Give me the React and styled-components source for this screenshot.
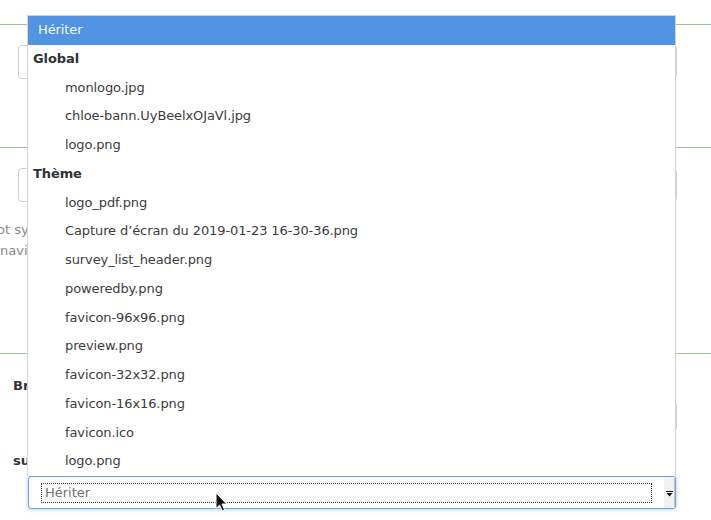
import React from 'react'
import styled, { createGlobalStyle } from 'styled-components'

const GlobalStyle = createGlobalStyle`
  html, body {
    margin: 0;
    padding: 0;
    background: #ffffff;
    overflow: hidden;
  }
  body {
    font-family: "DejaVu Sans", "Noto Sans", sans-serif;
    font-size: 13px;
    color: #333333;
  }
`

const options = [
  { label: 'Global', group: true },
  { label: 'monlogo.jpg' },
  { label: 'chloe-bann.UyBeelxOJaVl.jpg' },
  { label: 'logo.png' },
  { label: 'Thème', group: true },
  { label: 'logo_pdf.png' },
  { label: 'Capture d’écran du 2019-01-23 16-30-36.png' },
  { label: 'survey_list_header.png' },
  { label: 'poweredby.png' },
  { label: 'favicon-96x96.png' },
  { label: 'preview.png' },
  { label: 'favicon-32x32.png' },
  { label: 'favicon-16x16.png' },
  { label: 'favicon.ico' },
  { label: 'logo.png' },
]

export default function App() {
  return (
    <>
      <GlobalStyle />
      <Page>
        <Section $height={123}>
          <TextBox $left={18} $height={34} />
        </Section>
        <Section $height={206}>
          <TextBox $left={18} $height={34} />
          <HelpText>
            <span className="cut">ot system logo used for the survey page header</span>
            <span>navigation and the public list of surveys</span>
          </HelpText>
        </Section>
        <Section $height={180}>
          <FieldLabel $top={2}>Brand logo</FieldLabel>
          <TextBox $left={40} $height={31} $top={5} />
          <FieldLabel $top={19}>survey logo</FieldLabel>
          <SelectWrap>
            <DropList>
              <Option $active>Hériter</Option>
              {options.map((o, i) => (
                <Option key={i} $group={o.group}>{o.label}</Option>
              ))}
            </DropList>
            <Select>
              <FocusRing>Hériter</FocusRing>
              <ArrowBox>
                <svg width="7" height="6" viewBox="0 0 7 6">
                  <path d="M0 0h7v1H0z" fill="#111" />
                  <path d="M0.5 2h6L3.5 5.5z" fill="#111" />
                </svg>
              </ArrowBox>
            </Select>
          </SelectWrap>
        </Section>
        <Cursor width="13" height="20" viewBox="0 0 13 20">
          <path
            d="M1 1 L1 16.5 L4.6 13 L7.2 18.8 L9.6 17.7 L7 12 L11.8 12 Z"
            fill="#111"
            stroke="#fff"
            strokeWidth="1"
            strokeLinejoin="round"
          />
        </Cursor>
      </Page>
    </>
  )
}

const Page = styled.div`
  position: relative;
  width: 711px;
  height: 520px;
  padding-top: 24px;
  box-sizing: border-box;
`

const Section = styled.div`
  box-sizing: border-box;
  height: ${props => props.$height}px;
  border-top: 1px solid #9dbf9a;
  padding-top: 20px;
  display: flex;
  flex-direction: column;
  align-items: flex-start;
`

const TextBox = styled.div`
  margin-left: ${props => props.$left}px;
  margin-top: ${props => props.$top || 0}px;
  width: ${props => 677 - props.$left}px;
  height: ${props => props.$height}px;
  box-sizing: border-box;
  border: 1px solid #cfcfcf;
  border-radius: 4px;
  background: #fff;
`

const HelpText = styled.div`
  margin-top: 17px;
  display: flex;
  flex-direction: column;
  color: #8a8a8a;
  line-height: 21px;
  white-space: nowrap;
  .cut {
    margin-left: -3px;
  }
`

const FieldLabel = styled.div`
  margin-top: ${props => props.$top || 0}px;
  padding-left: 13px;
  line-height: 20px;
  font-weight: 700;
  color: #333;
`

const SelectWrap = styled.div`
  position: relative;
  margin-top: 5px;
  margin-left: 28px;
  width: 648px;
`

const Select = styled.div`
  box-sizing: border-box;
  height: 33px;
  display: flex;
  align-items: stretch;
  border: 1px solid #62a6e8;
  border-radius: 3px;
  background: #fff;
  box-shadow: 0 0 4px rgba(82, 148, 226, 0.55);
`

const FocusRing = styled.div`
  flex: 1;
  margin: 6px 12px 5px 12px;
  outline: 1px dotted #333;
  outline-offset: -1px;
  padding-left: 4px;
  line-height: 20px;
  color: #707070;
`

const ArrowBox = styled.div`
  width: 11px;
  background: #f1f1f1;
  border-right: 1px solid #c4c4c4;
  display: flex;
  align-items: center;
  justify-content: center;
  padding-top: 2px;
  box-sizing: border-box;
`

const DropList = styled.div`
  position: absolute;
  left: -1px;
  bottom: 100%;
  width: 649px;
  box-sizing: border-box;
  border: 1px solid #d4d4d4;
  border-bottom: none;
  background: #fff;
  display: flex;
  flex-direction: column;
  z-index: 2;
`

const Option = styled.div`
  height: 28.75px;
  line-height: 27.75px;
  white-space: nowrap;
  letter-spacing: -0.1px;
  padding-left: ${props => (props.$active ? 10 : props.$group ? 5 : 37)}px;
  font-weight: ${props => (props.$group ? 700 : 400)};
  color: ${props => (props.$active ? '#f4f8fd' : props.$group ? '#2e3436' : '#3c3c3c')};
  background: ${props => (props.$active ? '#5294e2' : 'transparent')};
`

const Cursor = styled.svg`
  position: absolute;
  left: 215px;
  top: 492px;
  z-index: 5;
`
